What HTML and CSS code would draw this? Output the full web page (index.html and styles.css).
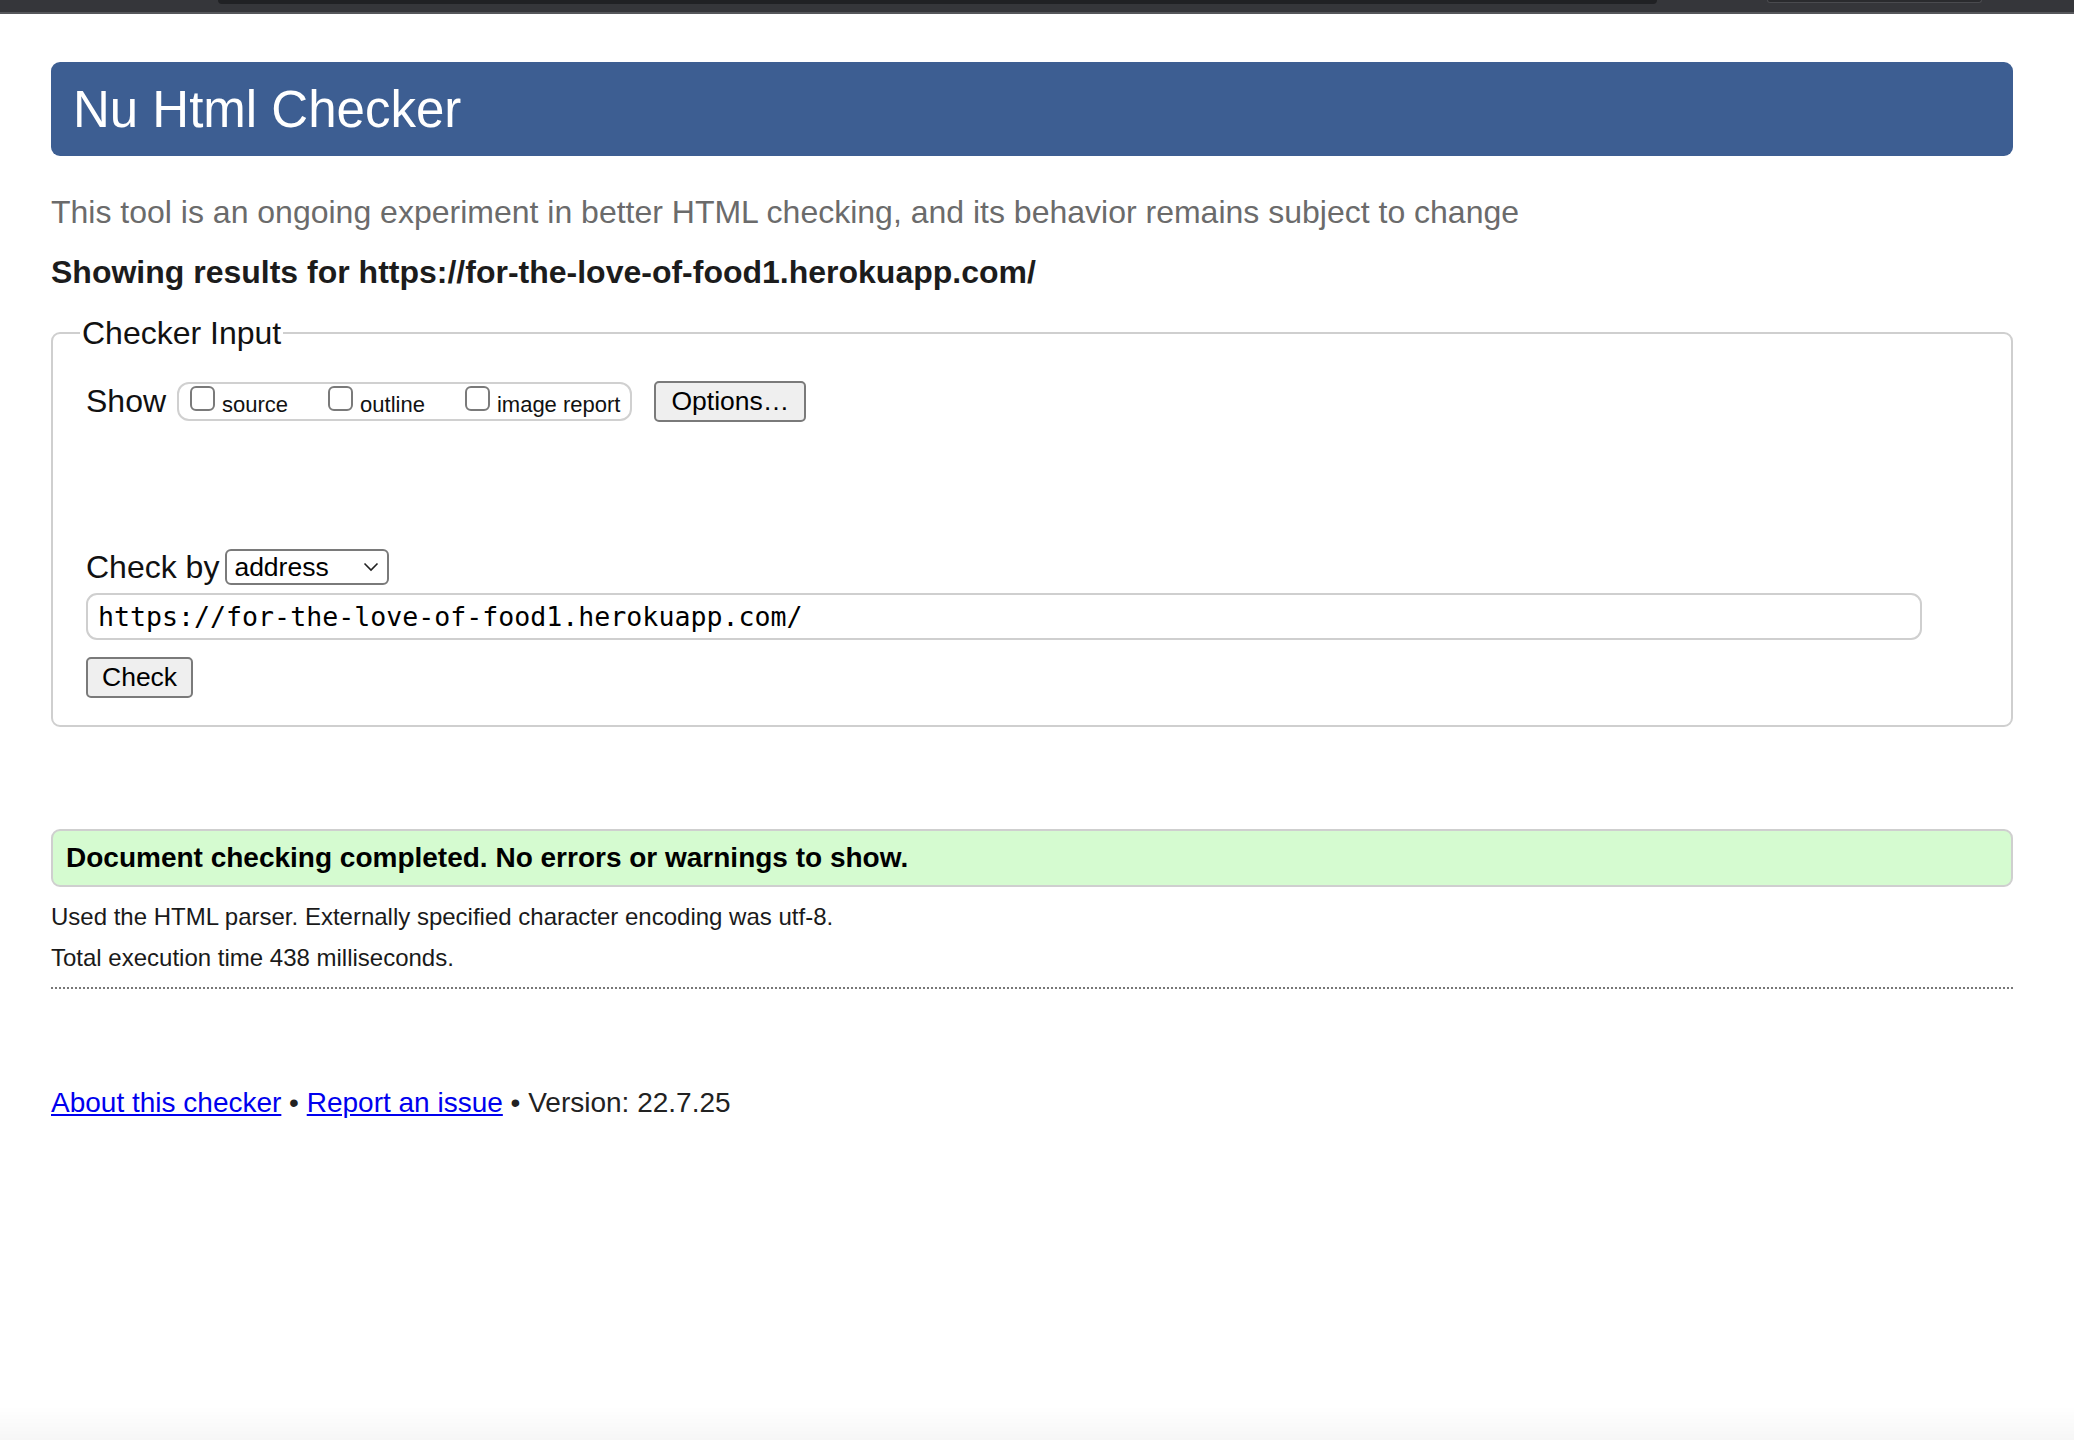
FILE: index.html
```html
<!DOCTYPE html>
<html lang="en">
<head>
<meta charset="utf-8">
<title>Nu Html Checker</title>
<link rel="stylesheet" href="styles.css">
</head>
<body>
<div class="chrome">
  <div class="chrome-tab chrome-tab-main"></div>
  <div class="chrome-tab chrome-tab-side"></div>
</div>
<div class="page">
  <h1 class="title">Nu Html Checker</h1>
  <p class="subtitle">This tool is an ongoing experiment in better HTML checking, and its behavior remains subject to change</p>
  <h2 class="results-for">Showing results for https://for-the-love-of-food1.herokuapp.com/</h2>

  <fieldset class="checker-input">
    <legend class="legend">Checker Input</legend>
    <div class="show-row">
      <span class="row-label">Show</span>
      <div class="show-group">
        <label class="opt"><input type="checkbox" class="cb"><span>source</span></label>
        <label class="opt"><input type="checkbox" class="cb"><span>outline</span></label>
        <label class="opt"><input type="checkbox" class="cb"><span>image report</span></label>
      </div>
      <button class="btn btn-options" type="button">Options…</button>
    </div>

    <div class="checkby-row">
      <span class="row-label">Check by</span>
      <span class="select-wrap">
        <select class="select"><option>address</option></select>
        <svg class="chevron" width="16" height="10" viewBox="0 0 16 10"><path d="M1.5 1.5 L8 8 L14.5 1.5" fill="none" stroke="#222" stroke-width="1.6"/></svg>
      </span>
    </div>
    <input class="url" type="text" value="https://for-the-love-of-food1.herokuapp.com/">
    <div class="check-row">
      <button class="btn btn-check" type="button">Check</button>
    </div>
  </fieldset>

  <p class="success">Document checking completed. No errors or warnings to show.</p>
  <p class="details">Used the HTML parser. Externally specified character encoding was utf-8.</p>
  <p class="details">Total execution time 438 milliseconds.</p>
  <hr class="dotted">

  <p class="footer"><a href="#">About this checker</a> • <a href="#">Report an issue</a> • Version: 22.7.25</p>
</div>
<div class="bottom-shade"></div>
</body>
</html>
```
FILE: styles.css
```css
html, body {
  margin: 0;
  padding: 0;
  background: #fff;
}
body {
  font-family: "Liberation Sans", Arial, Helvetica, sans-serif;
  color: #222;
}

/* browser chrome strip */
.chrome {
  height: 12px;
  background: #35363a;
  border-bottom: 2px solid #56575b;
  display: flex;
  align-items: flex-start;
  padding-left: 218px;
}
.chrome-tab-main {
  width: 1439px;
  height: 4px;
  background: #202124;
  border-radius: 0 0 9px 9px;
}
.chrome-tab-side {
  margin-left: 110px;
  width: 213px;
  height: 2px;
  background: #2a2b2e;
  border: 1px solid #4a4b4f;
  border-top: none;
  border-radius: 0 0 8px 8px;
}

.page {
  padding: 0 61px 0 51px;
}

.title {
  margin: 48px 0 0;
  height: 94px;
  line-height: 96px;
  padding: 0 22px;
  background: #3d5e92;
  color: #fff;
  font-size: 51px;
  font-weight: normal;
  border-radius: 9px;
}

.subtitle {
  margin: 36px 0 0;
  font-size: 32px;
  line-height: 40px;
  color: #6b6b6b;
}

.results-for {
  margin: 20px 0 0;
  font-size: 32px;
  line-height: 40px;
  font-weight: bold;
  color: #1c1c1c;
}

.checker-input {
  margin: 21px 0 0;
  border: 2px solid #cfcfcf;
  border-radius: 9px;
  padding: 28px 33px 27px;
  min-width: 0;
}
.legend {
  font-size: 32px;
  line-height: 40px;
  padding: 0 2px;
  margin-left: -6px;
  color: #111;
}

.row-label {
  font-size: 32px;
  color: #111;
}

.show-row {
  display: flex;
  align-items: center;
  height: 41px;
}
.show-group {
  margin-left: 11px;
  height: 39px;
  box-sizing: border-box;
  border: 2px solid #d0d0d0;
  border-radius: 12px;
  display: flex;
  align-items: center;
  gap: 40px;
  padding: 0 10px 0 11px;
}
.opt {
  display: flex;
  align-items: center;
  gap: 7px;
  font-size: 22px;
  color: #111;
}
.opt span {
  position: relative;
  top: 3px;
}
.cb {
  appearance: none;
  -webkit-appearance: none;
  margin: 0;
  width: 25px;
  height: 25px;
  box-sizing: border-box;
  border: 2px solid #7a7a7a;
  border-radius: 6px;
  background: #fff;
  position: relative;
  top: -3px;
}

.btn {
  font-family: "Liberation Sans", Arial, Helvetica, sans-serif;
  font-size: 26.5px;
  color: #000;
  background: #efefef;
  border: 2px solid #7a7a7a;
  border-radius: 5px;
  height: 41px;
  box-sizing: border-box;
  padding: 0 14px;
  line-height: 1;
}
.btn-options {
  margin-left: 22px;
  padding: 0 15px;
}

.checkby-row {
  margin-top: 127px;
  display: flex;
  align-items: center;
  height: 36px;
}
.select-wrap {
  margin-left: 6px;
  position: relative;
  display: inline-flex;
}
.select {
  appearance: none;
  -webkit-appearance: none;
  width: 164px;
  height: 36px;
  box-sizing: border-box;
  border: 2px solid #7a7a7a;
  border-radius: 6px;
  background: #fff;
  font-family: "Liberation Sans", Arial, Helvetica, sans-serif;
  font-size: 26.5px;
  color: #000;
  padding: 0 0 0 7px;
  margin: 0;
}
.chevron {
  position: absolute;
  right: 10px;
  top: 13px;
  pointer-events: none;
}

.url {
  display: block;
  margin-top: 8px;
  width: 1836px;
  height: 47px;
  box-sizing: border-box;
  border: 2px solid #cfcfcf;
  border-radius: 11px;
  padding: 0 10px;
  font-family: "DejaVu Sans Mono", "Liberation Mono", monospace;
  font-size: 26.6px;
  color: #000;
  background: #fff;
}

.check-row {
  margin-top: 17px;
  display: flex;
}

.success {
  margin: 102px 0 0;
  height: 58px;
  box-sizing: border-box;
  border: 2px solid #cfcfcf;
  border-radius: 9px;
  background: #d5fbd0;
  padding: 0 13px;
  font-size: 28px;
  font-weight: bold;
  line-height: 54px;
  color: #000;
}

.details {
  margin: 0;
  font-size: 24px;
  line-height: 41px;
  color: #1a1a1a;
}
.success + .details {
  margin-top: 9px;
}

.dotted {
  margin: 9px 0 0;
  border: none;
  border-top: 2px dotted #777;
  height: 0;
}

.footer {
  margin: 94px 0 0;
  font-size: 28px;
  line-height: 40px;
  color: #222;
}
.footer a {
  color: #0000ee;
  text-decoration: underline;
}

.bottom-shade {
  position: fixed;
  left: 0;
  right: 0;
  bottom: 0;
  height: 34px;
  background: linear-gradient(to bottom, rgba(0,0,0,0), rgba(0,0,0,0.035));
  pointer-events: none;
}
```
